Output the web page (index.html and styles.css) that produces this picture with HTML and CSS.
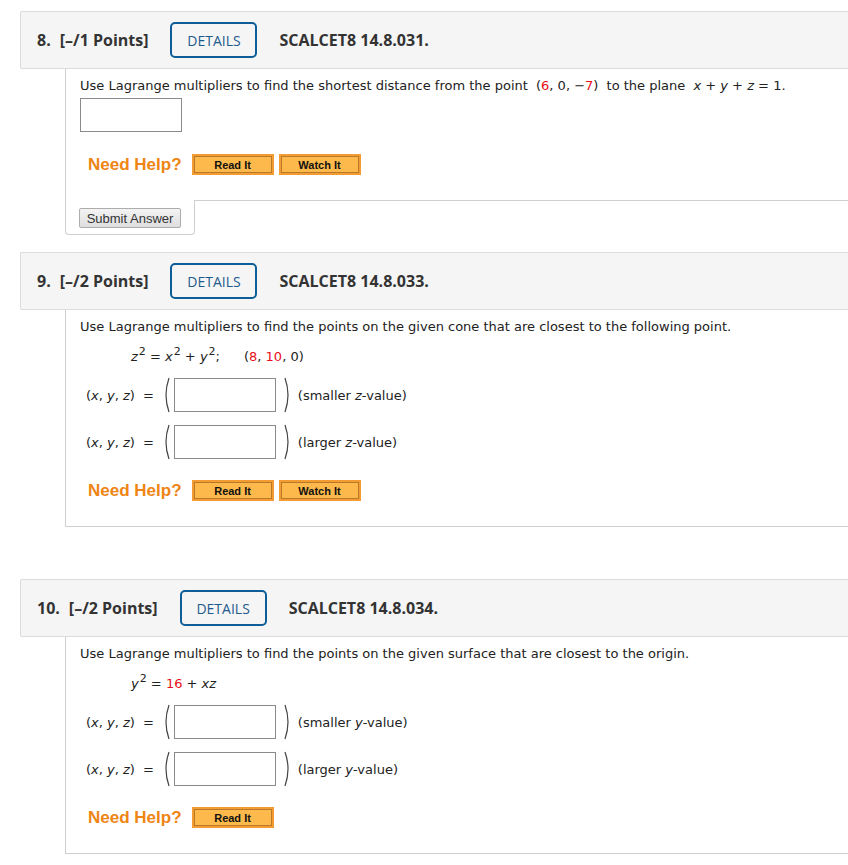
FILE: index.html
```html
<!DOCTYPE html>
<html>
<head>
<meta charset="utf-8">
<link rel="stylesheet" href="styles.css">
</head>
<body>
<div class="page">

  <section class="question q8">
    <div class="q-header">
      <span class="q-num">8.</span>
      <span class="q-points">[–/1 Points]</span>
      <span class="details">DETAILS</span>
      <span class="q-code">SCALCET8 14.8.031.</span>
    </div>
    <div class="q-body">
      <p class="prompt">Use Lagrange multipliers to find the shortest distance from the point <span class="math">(<span class="red">6</span>, 0, −<span class="red">7</span>)</span> to the plane <span class="math math-end"><i>x</i> + <i>y</i> + <i>z</i> = 1.</span></p>
      <div class="answer-box single"></div>
      <div class="help">
        <span class="need-help">Need Help?</span>
        <span class="hbtn">Read It</span>
        <span class="hbtn">Watch It</span>
      </div>
    </div>
    <div class="submit-tab">
      <span class="submit-btn">Submit Answer</span>
    </div>
  </section>

  <section class="question q9">
    <div class="q-header">
      <span class="q-num">9.</span>
      <span class="q-points">[–/2 Points]</span>
      <span class="details">DETAILS</span>
      <span class="q-code">SCALCET8 14.8.033.</span>
    </div>
    <div class="q-body">
      <p class="prompt">Use Lagrange multipliers to find the points on the given cone that are closest to the following point.</p>
      <div class="eq"><i>z</i><sup>2</sup> = <i>x</i><sup>2</sup> + <i>y</i><sup>2</sup>;<span class="pt">(<span class="red">8</span>, <span class="red">10</span>, 0)</span></div>
      <div class="row">
        <span class="lhs">(<i>x</i>, <i>y</i>, <i>z</i>)</span><span class="eqs">=</span>
        <svg class="paren" width="8" height="36" viewBox="0 0 8 36"><path d="M6 1 Q0 18 6 35" fill="none" stroke="#444" stroke-width="1.2"/></svg>
        <span class="answer-box"></span>
        <svg class="paren right" width="8" height="36" viewBox="0 0 8 36"><path d="M2 1 Q8 18 2 35" fill="none" stroke="#444" stroke-width="1.2"/></svg>
        <span class="note">(smaller <i>z</i>-value)</span>
      </div>
      <div class="row row2">
        <span class="lhs">(<i>x</i>, <i>y</i>, <i>z</i>)</span><span class="eqs">=</span>
        <svg class="paren" width="8" height="36" viewBox="0 0 8 36"><path d="M6 1 Q0 18 6 35" fill="none" stroke="#444" stroke-width="1.2"/></svg>
        <span class="answer-box"></span>
        <svg class="paren right" width="8" height="36" viewBox="0 0 8 36"><path d="M2 1 Q8 18 2 35" fill="none" stroke="#444" stroke-width="1.2"/></svg>
        <span class="note">(larger <i>z</i>-value)</span>
      </div>
      <div class="help help-after-rows">
        <span class="need-help">Need Help?</span>
        <span class="hbtn">Read It</span>
        <span class="hbtn">Watch It</span>
      </div>
    </div>
  </section>

  <section class="question q10">
    <div class="q-header">
      <span class="q-num">10.</span>
      <span class="q-points">[–/2 Points]</span>
      <span class="details">DETAILS</span>
      <span class="q-code">SCALCET8 14.8.034.</span>
    </div>
    <div class="q-body">
      <p class="prompt">Use Lagrange multipliers to find the points on the given surface that are closest to the origin.</p>
      <div class="eq"><i>y</i><sup>2</sup> = <span class="red">16</span> + <i>xz</i></div>
      <div class="row">
        <span class="lhs">(<i>x</i>, <i>y</i>, <i>z</i>)</span><span class="eqs">=</span>
        <svg class="paren" width="8" height="36" viewBox="0 0 8 36"><path d="M6 1 Q0 18 6 35" fill="none" stroke="#444" stroke-width="1.2"/></svg>
        <span class="answer-box"></span>
        <svg class="paren right" width="8" height="36" viewBox="0 0 8 36"><path d="M2 1 Q8 18 2 35" fill="none" stroke="#444" stroke-width="1.2"/></svg>
        <span class="note">(smaller <i>y</i>-value)</span>
      </div>
      <div class="row row2">
        <span class="lhs">(<i>x</i>, <i>y</i>, <i>z</i>)</span><span class="eqs">=</span>
        <svg class="paren" width="8" height="36" viewBox="0 0 8 36"><path d="M6 1 Q0 18 6 35" fill="none" stroke="#444" stroke-width="1.2"/></svg>
        <span class="answer-box"></span>
        <svg class="paren right" width="8" height="36" viewBox="0 0 8 36"><path d="M2 1 Q8 18 2 35" fill="none" stroke="#444" stroke-width="1.2"/></svg>
        <span class="note">(larger <i>y</i>-value)</span>
      </div>
      <div class="help help-after-rows">
        <span class="need-help">Need Help?</span>
        <span class="hbtn">Read It</span>
      </div>
    </div>
  </section>

</div>
</body>
</html>
```

FILE: styles.css
```css
html, body {
  margin: 0;
  padding: 0;
  background: #fff;
  overflow: hidden;
}

.page {
  padding: 11px 0 0 20px;
  font-family: "DejaVu Sans", Verdana, sans-serif;
  font-size: 13px;
  color: #222;
}

.question {
  display: flex;
  flex-direction: column;
}

.q8 { margin-bottom: 17px; }
.q9 { margin-bottom: 52px; }

.q-header {
  height: 56px;
  display: flex;
  align-items: center;
  background: #f5f5f5;
  border: 1px solid #dcdcdc;
  border-right: none;
  border-radius: 2px 0 0 2px;
  padding-left: 16px;
  font-family: "Open Sans", sans-serif;
  font-weight: 700;
  font-size: 16px;
  color: #333;
}

.q-num {
  margin-right: 9px;
}

.q-points {
  margin-right: 22px;
}

.details {
  box-sizing: border-box;
  width: 87px;
  height: 36px;
  border: 2px solid #0d5e98;
  border-radius: 5px;
  display: flex;
  align-items: center;
  justify-content: center;
  font-weight: 400;
  font-size: 14px;
  color: #1f5a8c;
  margin-right: 22px;
}

.q-body {
  margin-left: 45px;
  border-left: 1px solid #cfcfcf;
  border-bottom: 1px solid #cfcfcf;
  padding: 8px 0 25px 14px;
}

.prompt {
  margin: 0;
  line-height: 18px;
}

.math {
  padding: 0 4px;
  white-space: nowrap;
}

.math-end {
  padding-right: 0;
}

.red {
  color: #e8101a;
}

i {
  font-style: italic;
}

sup {
  font-size: 11px;
  line-height: 0;
  vertical-align: 6px;
  margin-left: 1px;
}

.answer-box {
  box-sizing: border-box;
  display: block;
  width: 102px;
  height: 34px;
  border: 1px solid #8a8a8a;
  background: #fff;
}

.answer-box.single {
  margin-top: 3px;
}

.help {
  display: flex;
  align-items: center;
  margin-top: 22px;
  padding-left: 8px;
}

.help-after-rows {
  margin-top: 21px;
}

.need-help {
  font-family: "Liberation Sans", Arial, sans-serif;
  font-weight: 700;
  font-size: 17px;
  color: #ee8514;
  margin-right: 10px;
}

.hbtn {
  box-sizing: border-box;
  width: 82px;
  height: 21px;
  display: flex;
  align-items: center;
  justify-content: center;
  background: #fdb94b;
  border: 2px solid #f29c32;
  box-shadow: inset 0 0 0 1px #b9782a;
  font-family: "Liberation Sans", Arial, sans-serif;
  font-weight: 700;
  font-size: 11px;
  color: #111;
  margin-right: 5px;
}

.submit-tab {
  align-self: flex-start;
  box-sizing: border-box;
  width: 130px;
  margin-left: 45px;
  margin-top: -1px;
  background: #fff;
  border: 1px solid #cfcfcf;
  border-top: none;
  border-radius: 0 0 4px 4px;
  padding: 8px 0 6px 13px;
}

.submit-btn {
  box-sizing: border-box;
  display: flex;
  align-items: center;
  justify-content: center;
  width: 102px;
  height: 20px;
  border: 1px solid #adadad;
  border-radius: 2px;
  background: linear-gradient(#f4f4f4, #dedede);
  font-family: "Liberation Sans", Arial, sans-serif;
  font-size: 13px;
  color: #333;
}

.eq {
  margin-top: 11px;
  line-height: 20px;
  padding-left: 51px;
}

.pt {
  margin-left: 24px;
}

.row {
  display: flex;
  align-items: center;
  margin-top: 11px;
  padding-left: 6px;
  height: 34px;
}

.row2 {
  margin-top: 13px;
}

.eqs {
  margin-left: 8px;
  margin-right: 9px;
}

.paren {
  margin-right: 3px;
}

.paren.right {
  margin-left: 7px;
  margin-right: 7px;
}
```
